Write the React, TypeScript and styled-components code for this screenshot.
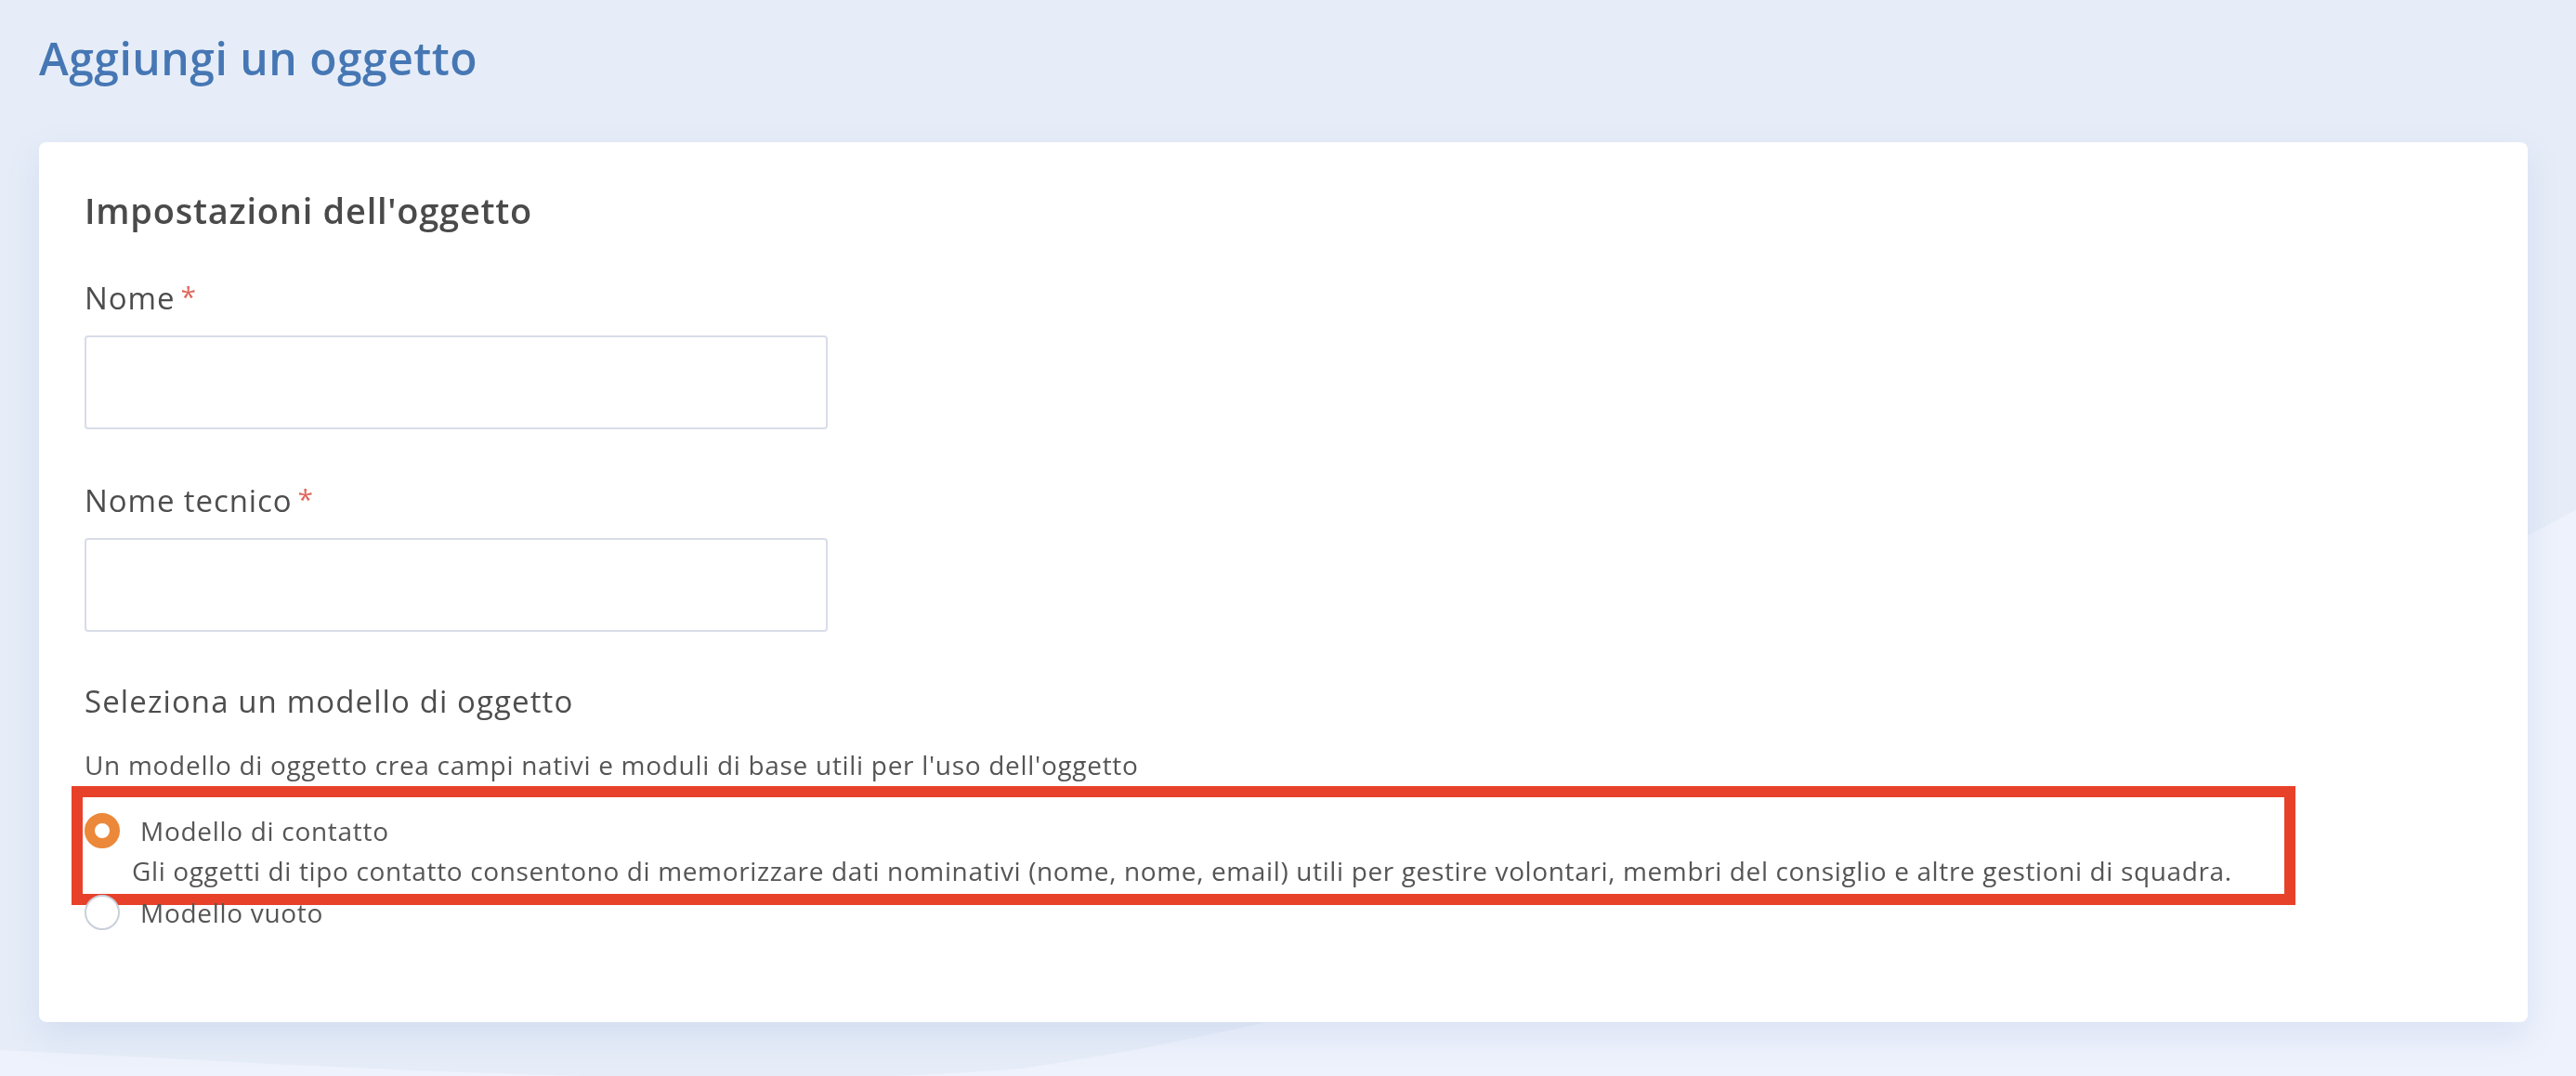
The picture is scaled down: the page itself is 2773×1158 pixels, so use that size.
import React, { useState } from 'react';
import styled, { createGlobalStyle } from 'styled-components';

const GlobalStyle = createGlobalStyle`
  html, body {
    margin: 0;
    padding: 0;
    background: #e6edf8;
    font-family: "Open Sans", Lato, sans-serif;
  }
  * {
    box-sizing: border-box;
  }
`

const Backdrop = styled.svg`
  position: fixed;
  inset: 0;
  width: 100%;
  height: 100%;
  z-index: 0;
`

const Page = styled.main`
  position: relative;
  z-index: 1;
  min-height: 100vh;
  padding: 34px 52px 0 42px;
`

const Title = styled.h1`
  margin: 0;
  font-size: 48px;
  line-height: 58px;
  font-weight: 600;
  letter-spacing: 0.5px;
  color: #4677b4;
`

const Card = styled.section`
  margin-top: 61px;
  background: #fff;
  border-radius: 8px;
  padding: 50px 49px 99px;
  box-shadow: 0 14px 36px rgba(96, 126, 200, 0.14);
`

const CardTitle = styled.h2`
  margin: 0 0 51px;
  font-size: 38px;
  line-height: 46px;
  font-weight: 600;
  letter-spacing: 0.75px;
  color: #4a4a4a;
`

const Field = styled.div`
  margin-bottom: 56px;
`

const Label = styled.label`
  display: block;
  margin-bottom: 21px;
  font-size: 33px;
  line-height: 38px;
  letter-spacing: 0.9px;
  color: #4d4d4d;
`

const Required = styled.span`
  margin-left: 6px;
  font-size: 30px;
  color: #e0675c;
  vertical-align: 3px;
`

const TextInput = styled.input`
  display: block;
  width: 800px;
  height: 101px;
  border: 2px solid #d8dde8;
  border-radius: 4px;
  padding: 0 20px;
  font: inherit;
  font-size: 28px;
  outline: none;
`

const GroupTitle = styled.div`
  margin-bottom: 32px;
  font-size: 33px;
  line-height: 38px;
  letter-spacing: 1.1px;
  color: #4d4d4d;
`

const Hint = styled.p`
  margin: 0 0 35px;
  font-size: 28px;
  line-height: 34px;
  letter-spacing: 0.7px;
  color: #555;
`

const Options = styled.div`
  display: flex;
  flex-direction: column;
  gap: 7px;
`

const Option = styled.div`
  position: relative;
  display: flex;
  flex-direction: column;
  cursor: pointer;
`

const OptionHead = styled.div`
  display: flex;
  align-items: center;
  gap: 22px;
  min-height: 38px;
`

const Radio = styled.span<{ $checked: boolean }>`
  flex: none;
  width: 38px;
  height: 38px;
  border-radius: 50%;
  background: #fff;
  border: ${p => (p.$checked ? '11px solid #ec883a' : '2px solid #c9cfdb')};
`

const OptionLabel = styled.span`
  font-size: 28px;
  line-height: 37px;
  letter-spacing: 0.7px;
  color: #555;
`

const OptionDesc = styled.div`
  margin-top: 6px;
  padding-left: 51px;
  font-size: 28px;
  line-height: 37px;
  letter-spacing: 0.63px;
  color: #555;
`

const Highlight = styled.div`
  position: absolute;
  top: -29px;
  left: -14px;
  width: 2394px;
  height: 128px;
  border: 12px solid #e8412a;
  pointer-events: none;
`

const models = [
  {
    id: 'contact',
    label: 'Modello di contatto',
    desc: 'Gli oggetti di tipo contatto consentono di memorizzare dati nominativi (nome, nome, email) utili per gestire volontari, membri del consiglio e altre gestioni di squadra.',
  },
  { id: 'empty', label: 'Modello vuoto' },
]

export default function App() {
  const [model, setModel] = useState('contact');
  return (
    <>
      <GlobalStyle />
      <Backdrop viewBox="0 0 2773 1158" preserveAspectRatio="none">
        <rect width="2773" height="1158" fill="#eef2fc" />
        <path d="M0 0 H2773 V549 C2300 800 1700 1060 1100 1150 C800 1175 400 1150 0 1130 Z" fill="#e6edf8" />
      </Backdrop>
      <Page>
        <Title>Aggiungi un oggetto</Title>
        <Card>
          <CardTitle>Impostazioni dell'oggetto</CardTitle>
          <Field>
            <Label>Nome<Required>*</Required></Label>
            <TextInput />
          </Field>
          <Field>
            <Label>Nome tecnico<Required>*</Required></Label>
            <TextInput />
          </Field>
          <GroupTitle>Seleziona un modello di oggetto</GroupTitle>
          <Hint>Un modello di oggetto crea campi nativi e moduli di base utili per l'uso dell'oggetto</Hint>
          <Options>
            {models.map(m => (
              <Option key={m.id} onClick={() => setModel(m.id)}>
                <OptionHead>
                  <Radio $checked={model === m.id} />
                  <OptionLabel>{m.label}</OptionLabel>
                </OptionHead>
                {m.desc && <OptionDesc>{m.desc}</OptionDesc>}
                {m.id === 'contact' && <Highlight />}
              </Option>
            ))}
          </Options>
        </Card>
      </Page>
    </>
  );
}
